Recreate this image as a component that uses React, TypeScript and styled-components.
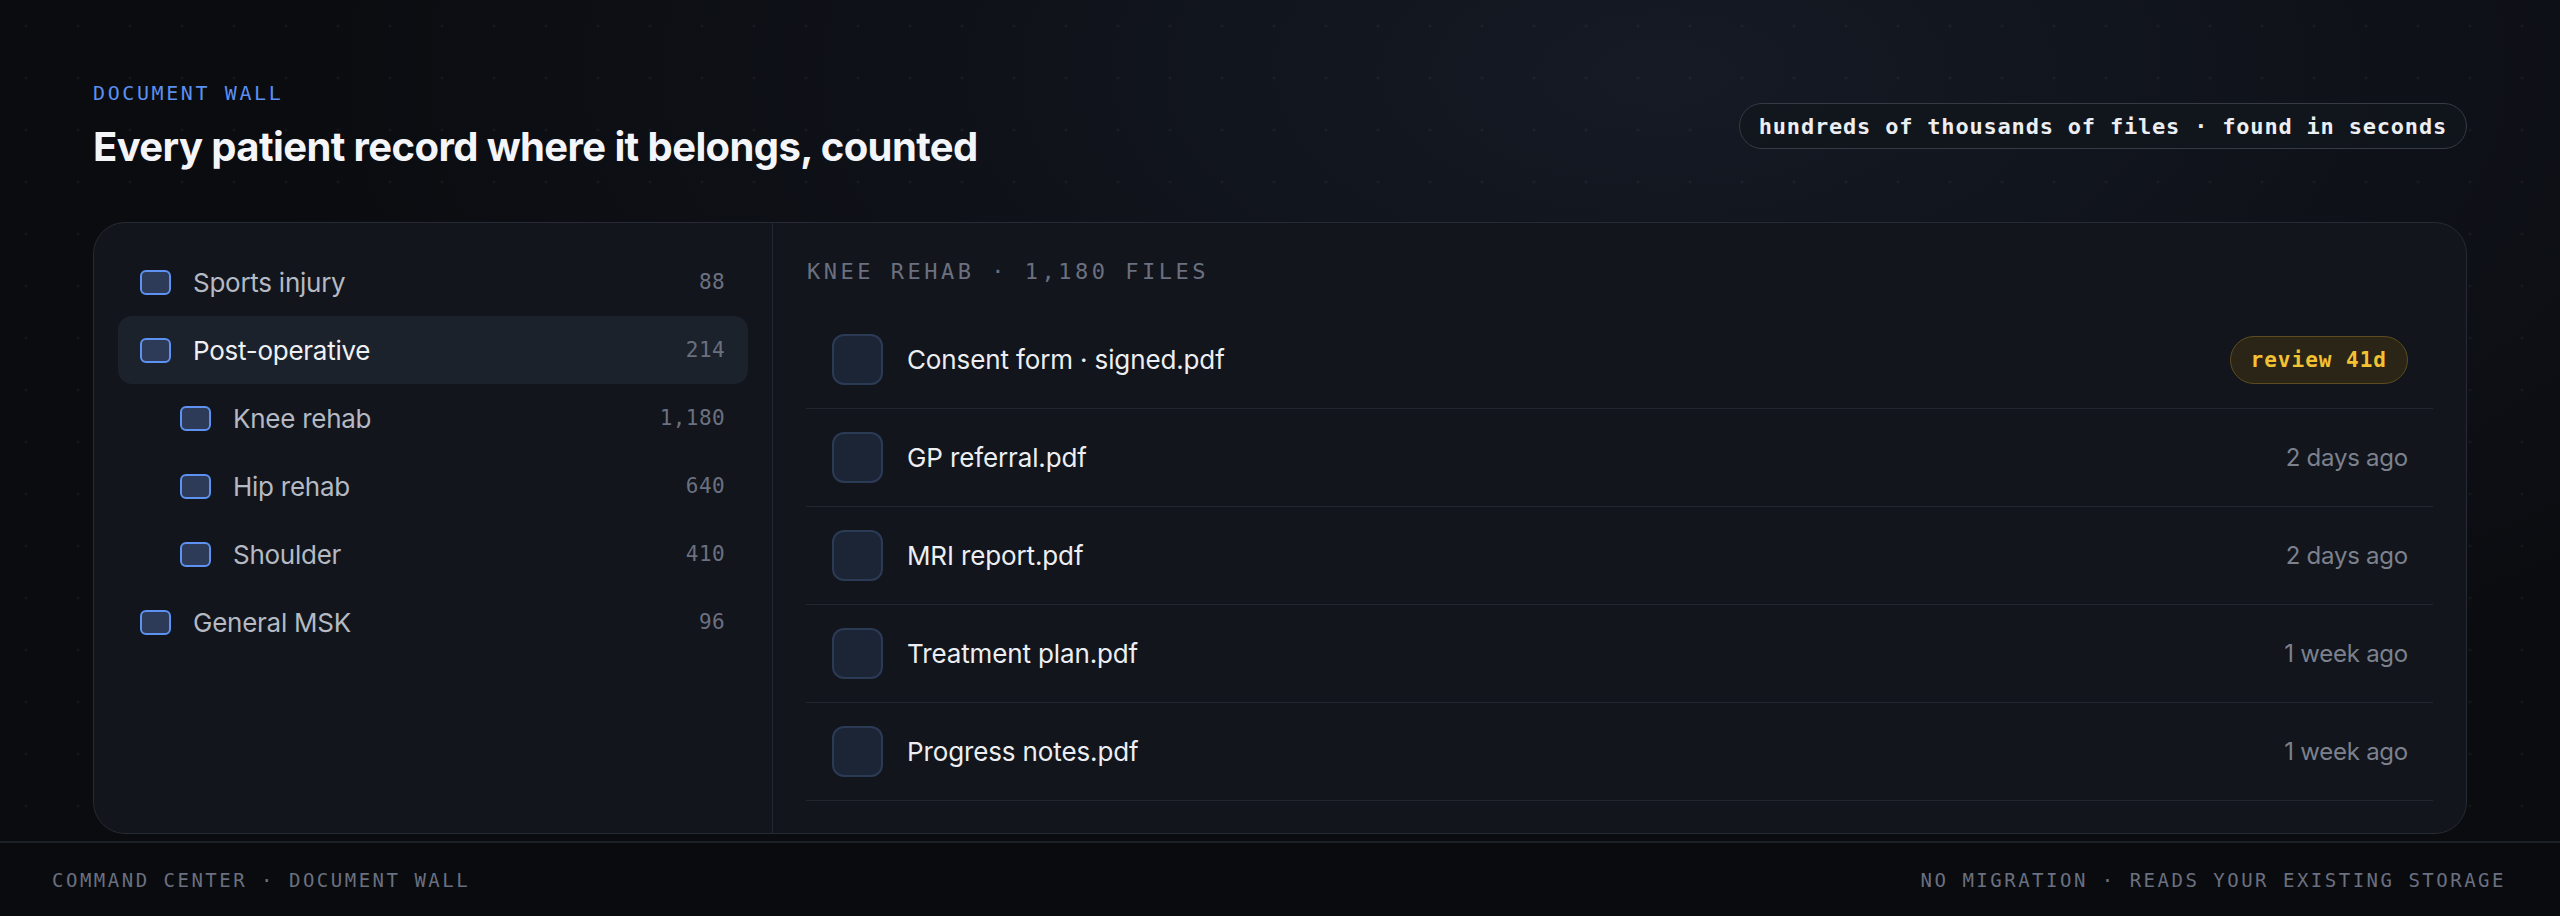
import styled, { createGlobalStyle } from "styled-components";

const GlobalStyle = createGlobalStyle`
  html, body {
    margin: 0;
    padding: 0;
    background: #0a0c10;
  }
  * {
    box-sizing: border-box;
  }
`;

const mono = `"DejaVu Sans Mono", "Liberation Mono", monospace`;
const sans = `Inter, "Noto Sans", "Liberation Sans", sans-serif`;

const Page = styled.div`
  width: 2560px;
  height: 916px;
  display: flex;
  flex-direction: column;
  font-family: ${sans};
  background:
    radial-gradient(circle, rgba(255, 255, 255, 0.035) 1.2px, transparent 1.8px) 0 0 / 52px 52px,
    radial-gradient(ellipse 1400px 700px at 65% 8%, #151a25 0%, #0e1117 55%, #0a0c10 100%);
  overflow: hidden;
`;

const Header = styled.header`
  display: flex;
  align-items: center;
  justify-content: space-between;
  padding: 81px 93px 0;
`;

const TitleBlock = styled.div`
  display: flex;
  flex-direction: column;
  gap: 18px;
`;

const Eyebrow = styled.div`
  font-family: ${mono};
  font-size: 20px;
  line-height: 24px;
  letter-spacing: 2.6px;
  color: #5b8ff0;
`;

const Title = styled.h1`
  margin: 0;
  font-size: 40px;
  line-height: 48px;
  font-weight: 700;
  letter-spacing: -0.015em;
  color: #f4f5f8;
`;

const Pill = styled.div`
  height: 46px;
  padding: 0 19px;
  display: flex;
  align-items: center;
  border: 1px solid #353a45;
  border-radius: 23px;
  background: rgba(18, 22, 29, 0.8);
  font-family: ${mono};
  font-size: 22px;
  font-weight: 700;
  letter-spacing: 0.8px;
  color: #eceef2;
`;

const Card = styled.section`
  margin: 51px 93px 0;
  height: 612px;
  display: grid;
  grid-template-columns: 679px 1fr;
  background: #12151b;
  border: 1px solid #262a32;
  border-radius: 32px;
  overflow: hidden;
`;

const Sidebar = styled.nav`
  display: flex;
  flex-direction: column;
  padding: 25px 24px 0 24px;
  border-right: 1px solid #23272f;
`;

const TreeRow = styled.div<{ $active?: boolean; $depth?: number }>`
  height: 68px;
  display: flex;
  align-items: center;
  gap: 22px;
  padding: 0 23px 0 ${(p) => 22 + (p.$depth ?? 0) * 40}px;
  border-radius: 14px;
  background: ${(p) => (p.$active ? "#1c222c" : "transparent")};
  color: ${(p) => (p.$active ? "#eef0f4" : "#b4b9c3")};
  font-size: 26px;
  letter-spacing: -0.01em;
`;

const FolderBox = styled.span`
  flex: none;
  width: 31px;
  height: 25px;
  border: 2px solid #5d92f2;
  border-radius: 6px;
  background: #2d3b58;
`;

const Count = styled.span`
  margin-left: auto;
  font-family: ${mono};
  font-size: 21px;
  letter-spacing: 0.4px;
  color: #6b7080;
`;

const FilePane = styled.div`
  display: flex;
  flex-direction: column;
  padding: 35px 33px 0 33px;
`;

const PaneHeading = styled.div`
  font-family: ${mono};
  font-size: 22px;
  line-height: 28px;
  letter-spacing: 3.5px;
  color: #6b7080;
  padding-left: 1px;
  margin-bottom: 25px;
`;

const FileRow = styled.div`
  height: 98px;
  display: flex;
  align-items: center;
  gap: 24px;
  padding: 0 25px 0 26px;
  border-bottom: 1px solid #22262e;
`;

const FileIcon = styled.span`
  flex: none;
  width: 51px;
  height: 51px;
  border: 2px solid #2b3a55;
  border-radius: 12px;
  background: #1c2536;
`;

const FileName = styled.span`
  font-size: 26px;
  letter-spacing: -0.005em;
  color: #eceef2;
`;

const When = styled.span`
  margin-left: auto;
  font-size: 24px;
  letter-spacing: -0.01em;
  color: #7c818d;
`;

const ReviewBadge = styled.span`
  margin-left: auto;
  height: 48px;
  padding: 0 20px;
  display: flex;
  align-items: center;
  border: 1.5px solid #5c4d20;
  border-radius: 24px;
  background: #2a2516;
  font-family: ${mono};
  font-size: 21px;
  font-weight: 700;
  letter-spacing: 1px;
  color: #f2c233;
`;

const Footer = styled.footer`
  margin-top: auto;
  height: 75px;
  display: flex;
  align-items: center;
  justify-content: space-between;
  padding: 0 54px 0 52px;
  border-top: 2px solid #1c2027;
  background: rgba(9, 11, 14, 0.7);
  font-family: ${mono};
  font-size: 19px;
  letter-spacing: 2.5px;
  color: #6b7080;
`;

const folders = [
  { name: "Sports injury", count: "88", depth: 0 },
  { name: "Post-operative", count: "214", depth: 0, active: true },
  { name: "Knee rehab", count: "1,180", depth: 1 },
  { name: "Hip rehab", count: "640", depth: 1 },
  { name: "Shoulder", count: "410", depth: 1 },
  { name: "General MSK", count: "96", depth: 0 },
];

const files = [
  { name: "Consent form · signed.pdf", review: "review 41d" },
  { name: "GP referral.pdf", when: "2 days ago" },
  { name: "MRI report.pdf", when: "2 days ago" },
  { name: "Treatment plan.pdf", when: "1 week ago" },
  { name: "Progress notes.pdf", when: "1 week ago" },
];

export default function App() {
  return (
    <>
      <GlobalStyle />
      <Page>
        <Header>
          <TitleBlock>
            <Eyebrow>DOCUMENT WALL</Eyebrow>
            <Title>Every patient record where it belongs, counted</Title>
          </TitleBlock>
          <Pill>hundreds of thousands of files · found in seconds</Pill>
        </Header>

        <Card>
          <Sidebar>
            {folders.map((f) => (
              <TreeRow key={f.name} $active={f.active} $depth={f.depth}>
                <FolderBox />
                <span>{f.name}</span>
                <Count>{f.count}</Count>
              </TreeRow>
            ))}
          </Sidebar>

          <FilePane>
            <PaneHeading>KNEE REHAB · 1,180 FILES</PaneHeading>
            {files.map((f) => (
              <FileRow key={f.name}>
                <FileIcon />
                <FileName>{f.name}</FileName>
                {f.review ? <ReviewBadge>{f.review}</ReviewBadge> : <When>{f.when}</When>}
              </FileRow>
            ))}
          </FilePane>
        </Card>

        <Footer>
          <span>COMMAND CENTER · DOCUMENT WALL</span>
          <span>NO MIGRATION · READS YOUR EXISTING STORAGE</span>
        </Footer>
      </Page>
    </>
  );
}
